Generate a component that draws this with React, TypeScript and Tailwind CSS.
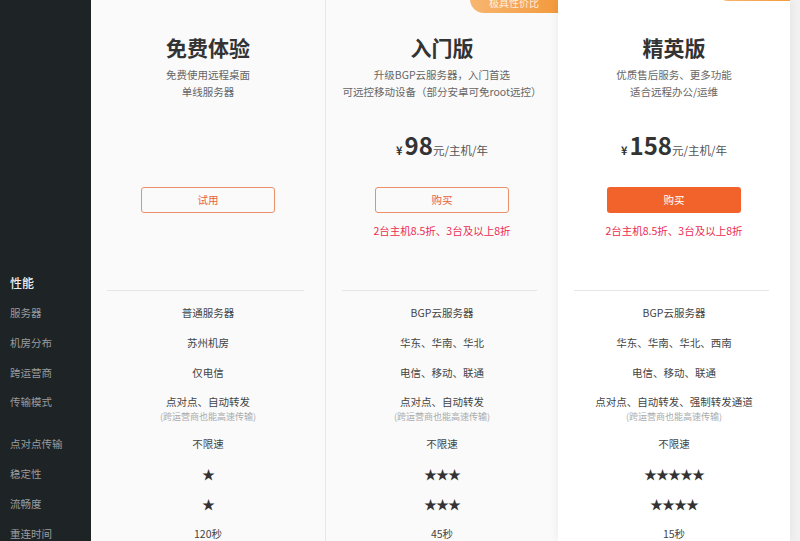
import React from "react"

type Plan = {
  title: string
  desc: string[]
  price?: string
  button: string
  filled?: boolean
  promo?: string
  badge?: string
  topLine?: boolean
  rows: { main: string; sub?: string; stars?: boolean }[]
  bg: string
}

const labels = ["服务器", "机房分布", "跨运营商", "传输模式", "点对点传输", "稳定性", "流畅度", "重连时间"]

const plans: Plan[] = [
  {
    title: "免费体验",
    desc: ["免费使用远程桌面", "单线服务器"],
    button: "试用",
    bg: "bg-[#fafafa]",
    rows: [
      { main: "普通服务器" },
      { main: "苏州机房" },
      { main: "仅电信" },
      { main: "点对点、自动转发", sub: "(跨运营商也能高速传输)" },
      { main: "不限速" },
      { main: "★", stars: true },
      { main: "★", stars: true },
      { main: "120秒" },
    ],
  },
  {
    title: "入门版",
    desc: ["升级BGP云服务器，入门首选", "可远控移动设备（部分安卓可免root远控）"],
    price: "98",
    button: "购买",
    promo: "2台主机8.5折、3台及以上8折",
    badge: "极具性价比",
    bg: "bg-[#fafafa]",
    rows: [
      { main: "BGP云服务器" },
      { main: "华东、华南、华北" },
      { main: "电信、移动、联通" },
      { main: "点对点、自动转发", sub: "(跨运营商也能高速传输)" },
      { main: "不限速" },
      { main: "★★★", stars: true },
      { main: "★★★", stars: true },
      { main: "45秒" },
    ],
  },
  {
    title: "精英版",
    desc: ["优质售后服务、更多功能", "适合远程办公/运维"],
    price: "158",
    button: "购买",
    filled: true,
    promo: "2台主机8.5折、3台及以上8折",
    topLine: true,
    bg: "bg-white",
    rows: [
      { main: "BGP云服务器" },
      { main: "华东、华南、华北、西南" },
      { main: "电信、移动、联通" },
      { main: "点对点、自动转发、强制转发通道", sub: "(跨运营商也能高速传输)" },
      { main: "不限速" },
      { main: "★★★★★", stars: true },
      { main: "★★★★", stars: true },
      { main: "15秒" },
    ],
  },
]

function PlanColumn({ plan, first }: { plan: Plan; first?: boolean }) {
  return (
    <div
      className={`relative shrink-0 ${plan.bg} ${first ? "w-[235px] border-r border-[#e8e8e8]" : "w-[232px]"} ${
        plan.filled ? "shadow-[0_0_10px_rgba(0,0,0,0.07)] z-10" : ""
      }`}
    >
      {plan.badge && (
        <div className="absolute right-0 top-[-7px] h-[20px] w-[88px] rounded-bl-[14px] bg-gradient-to-r from-[#f7b66f] to-[#f39a3c] text-center text-[10px] leading-[20px] text-white/80">
          {plan.badge}
        </div>
      )}
      {plan.topLine && (
        <div className="absolute right-0 top-[-20px] h-[21px] w-[74px] rounded-bl-[12px] bg-gradient-to-r from-[#f7b66f] to-[#f39a3c]" />
      )}
      <div className="flex h-[290px] flex-col items-center pt-[34px]">
        <div className="text-[21px] font-bold leading-[26px] text-[#333]">{plan.title}</div>
        <div className="mt-[6px] text-center text-[10.5px] leading-[17px] text-[#666]">
          {plan.desc.map((d) => (
            <div key={d}>{d}</div>
          ))}
        </div>
        <div className="mt-[30px] flex h-[30px] items-baseline text-[#333]">
          {plan.price && (
            <>
              <span className="mr-[2px] text-[11px] font-bold">¥</span>
              <span className="text-[24px] font-bold leading-[30px]">{plan.price}</span>
              <span className="text-[11.5px] text-[#555]">元/主机/年</span>
            </>
          )}
        </div>
        <button
          className={`mt-[27px] h-[26px] w-[134px] rounded-[3px] text-[10.5px] ${
            plan.filled
              ? "bg-[#f2622b] text-white"
              : "border border-[#e9906a] bg-transparent text-[#e8623a]"
          }`}
        >
          {plan.button}
        </button>
        {plan.promo && <div className="mt-[11px] text-[10.5px] leading-[14px] text-[#ec2a50]">{plan.promo}</div>}
      </div>
      <div className="ml-[16px] mr-[21px] border-t border-[#e6e6e6]" />
      <div className="pt-[7px]">
        {plan.rows.map((r, i) => (
          <div
            key={i}
            className={`flex flex-col items-center ${r.sub ? "h-[41px] pt-[6px]" : "h-[30px] justify-center"}`}
          >
            <div
              className={
                r.stars
                  ? "text-[13px] leading-[16px] tracking-[-1px] text-[#333]"
                  : "text-[10.5px] leading-[16px] text-[#444]"
              }
            >
              {r.main}
            </div>
            {r.sub && <div className="text-[9px] leading-[13px] text-[#aaa]">{r.sub}</div>}
          </div>
        ))}
      </div>
    </div>
  )
}

export default function App() {
  return (
    <div
      className="flex h-[541px] w-[800px] overflow-hidden bg-[#f1f1f1]"
      style={{ fontFamily: '"Noto Sans CJK SC", "Liberation Sans", sans-serif' }}
    >
      <div className="w-[91px] shrink-0 bg-[#1e2326] pt-[268px]">
        <div className="flex h-[30px] items-center pl-[10px] text-[12px] font-medium text-[#eee]">性能</div>
        {labels.map((l) => (
          <div
            key={l}
            className={`flex pl-[10px] text-[10.5px] leading-[16px] text-[#9a9c9e] ${
              l === "传输模式" ? "h-[41px] items-start pt-[6px]" : "h-[30px] items-center"
            }`}
          >
            {l}
          </div>
        ))}
      </div>
      {plans.map((p, i) => (
        <PlanColumn key={p.title} plan={p} first={i === 0} />
      ))}
    </div>
  )
}
